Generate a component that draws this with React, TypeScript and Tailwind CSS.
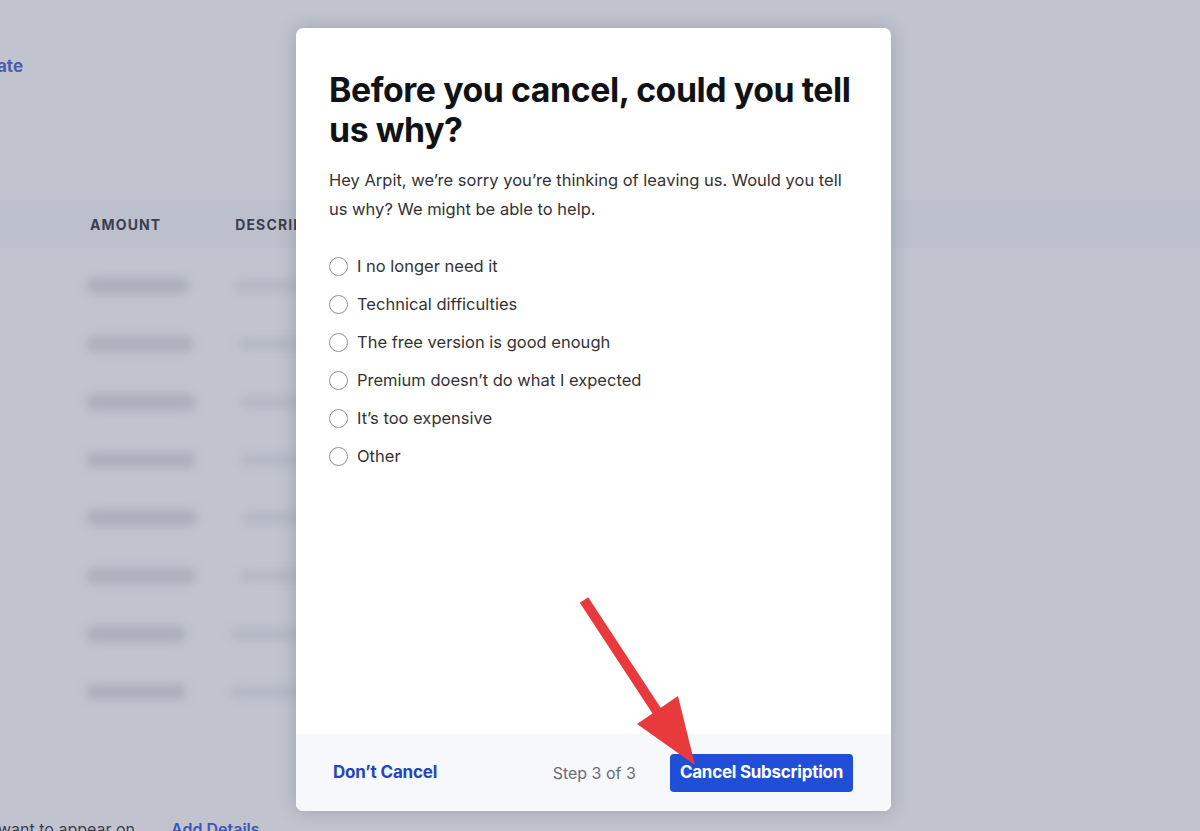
import React from "react";

const options = [
  "I no longer need it",
  "Technical difficulties",
  "The free version is good enough",
  "Premium doesn’t do what I expected",
  "It’s too expensive",
  "Other",
];

const rowYs = [0, 1, 2, 3, 4, 5, 6, 7];
const leftWidths = [104, 108, 110, 110, 112, 110, 100, 100];

export default function App() {
  return (
    <div
      className="relative w-[1200px] h-[831px] overflow-hidden bg-[#c1c4ce]"
      style={{ fontFamily: "Inter, 'Noto Sans', sans-serif" }}
    >
      {/* Dimmed background page */}
      <div className="flex flex-col h-full">
        <div className="pt-[54px] h-[200px]">
          <span className="ml-[-3px] text-[17px] font-bold text-[#4c5db2]">ate</span>
        </div>
        <div className="h-[48px] bg-[#bcbfcc] flex items-center">
          <span className="ml-[90px] text-[14px] font-bold tracking-[0.08em] text-[#3b3e4c]">AMOUNT</span>
          <span className="ml-[74px] text-[14px] font-bold tracking-[0.08em] text-[#3b3e4c]">DESCRIPTION</span>
        </div>
        <div className="flex flex-col pt-[30px] gap-[42px]">
          {rowYs.map((i) => (
            <div key={i} className="flex items-center h-[16px]">
              <div
                className="ml-[86px] h-[16px] rounded-full bg-[#acafbb] blur-[5px]"
                style={{ width: leftWidths[i] }}
              />
              <div className="ml-[44px] h-[12px] w-[90px] rounded-full bg-[#b4b7c3] blur-[5px]" />
            </div>
          ))}
        </div>
        <div className="mt-auto flex items-end h-[20px] overflow-visible">
          <span className="ml-[-2px] mb-[-10px] text-[16px] text-[#3b3e4c]">want to appear on</span>
          <span className="ml-[36px] mb-[-10px] text-[16px] font-semibold text-[#3e56b8]">Add Details</span>
        </div>
      </div>

      {/* Modal */}
      <div className="absolute left-[296px] top-[28px] w-[595px] h-[783px] bg-white rounded-[7px] shadow-[0_0_18px_rgba(60,64,80,0.25)] flex flex-col overflow-hidden">
        <div className="flex-1 px-[33px] pt-[42px]">
          <h1 className="text-[33.8px] leading-[40px] font-bold text-[#111216] tracking-[-0.012em]">
            Before you cancel, could you tell us why?
          </h1>
          <p className="mt-[16px] text-[16.5px] leading-[29px] text-[#333333] pr-[12px]">
            Hey Arpit, we’re sorry you’re thinking of leaving us. Would you tell us why? We might be able to help.
          </p>
          <div className="mt-[30px] flex flex-col gap-[14px]">
            {options.map((o) => (
              <label key={o} className="flex items-center h-[24px]">
                <span className="w-[19px] h-[19px] rounded-full border border-[#8e9099] bg-white" />
                <span className="ml-[9px] text-[16.5px] text-[#333333]">{o}</span>
              </label>
            ))}
          </div>
        </div>
        <div className="h-[77px] bg-[#f7f8fc] flex items-center px-[37px]">
          <span className="text-[17px] font-bold text-[#2545b8] tracking-[-0.01em]">Don’t Cancel</span>
          <span className="ml-auto text-[16px] text-[#6b6d75]">Step 3 of 3</span>
          <button className="ml-[34px] mr-[1px] h-[38px] px-[10px] rounded-[4px] bg-[#1f4fd6] text-white text-[17px] font-bold tracking-[-0.015em]">
            Cancel Subscription
          </button>
        </div>
      </div>

      {/* Red arrow annotation */}
      <svg className="absolute left-0 top-0" width="1200" height="831" viewBox="0 0 1200 831">
        <line x1="584" y1="600" x2="668" y2="728" stroke="#e83a3c" strokeWidth="10" />
        <polygon points="695,765 637,724 678,696" fill="#e83a3c" />
      </svg>
    </div>
  );
}
